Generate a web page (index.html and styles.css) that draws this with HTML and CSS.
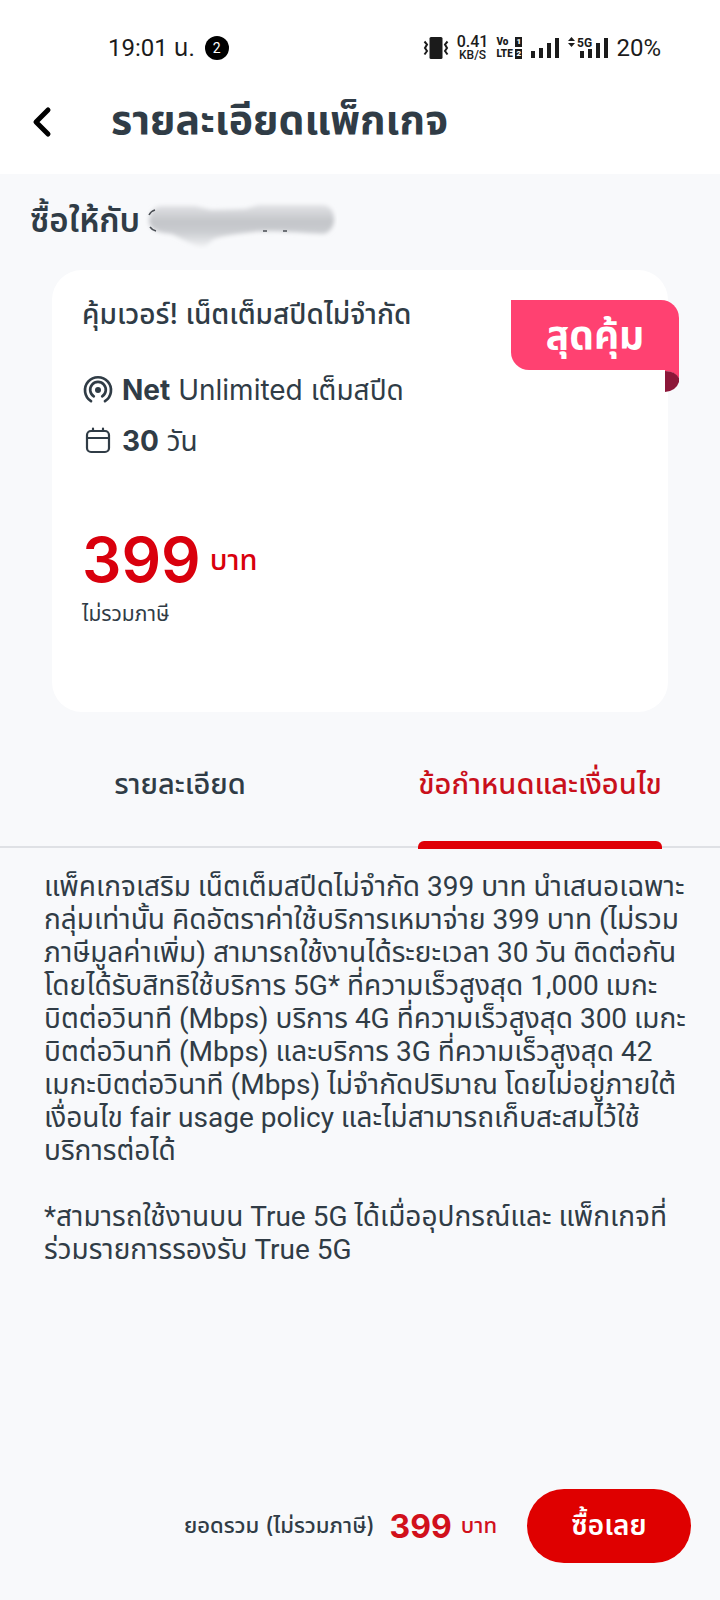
FILE: index.html
```html
<!DOCTYPE html>
<html lang="th">
<head>
<meta charset="utf-8">
<meta name="viewport" content="width=device-width, initial-scale=1">
<title>รายละเอียดแพ็กเกจ</title>
<link rel="stylesheet" href="styles.css">
</head>
<body>
<div class="screen">
  <div class="status">
    <div class="status-side">
      <span class="clock">19:01 น.</span>
      <span class="count">2</span>
    </div>
    <div class="status-side status-right">
      <svg width="26" height="24" viewBox="0 0 26 24" fill="none" stroke="#1b1b1b" stroke-width="2">
        <rect x="6.5" y="1" width="13" height="22" rx="1.5" fill="#1b1b1b" stroke="none"/>
        <path d="M1.500 5.500l2.500 3L2 12l2 3-2.500 3.500M24.500 5.500l-2.500 3 2 3.500-2 3 2.500 3.500"/>
      </svg>
      <span class="speed"><b>0.41</b><i>KB/S</i></span>
      <span class="volte"><span>Vo<em>1</em></span><span>LTE<em>2</em></span></span>
      <svg width="30" height="22" viewBox="0 0 30 22" fill="#1b1b1b">
        <path d="M1 14h4v7H1zM9 11h4v10H9zM17 6h4v15h-4zM25 1h4v20h-4z"/>
      </svg>
      <svg width="40" height="24" viewBox="0 0 40 24" fill="#1b1b1b">
        <path d="M0 5l3.500-4L7 5zM0 7l3.500 4L7 7z"/>
        <path d="M12 15h4v7h-4zM20 13h4v9h-4zM28 7h4v15h-4zM36 2h4v20h-4z"/>
        <text x="9" y="11" class="fiveg">5G</text>
      </svg>
      <span class="battery">20%</span>
    </div>
  </div>

  <header class="header">
    <button class="back" type="button" aria-label="ย้อนกลับ">
      <svg width="20" height="32" viewBox="0 0 20 32" fill="none" stroke="#000" stroke-width="5" stroke-linecap="round" stroke-linejoin="round"><path d="M16 4L4 16l12 12"/></svg>
    </button>
    <h1 class="title">รายละเอียดแพ็กเกจ</h1>
  </header>

  <main class="main">
    <div class="buyer">
      <h2 class="buyer-label">ซื้อให้กับ</h2>
      <svg class="smudge" width="192" height="48" viewBox="0 0 192 48">
        <defs>
          <filter id="soft" x="-10%" y="-20%" width="120%" height="140%"><feGaussianBlur stdDeviation="2.2"/></filter>
          <linearGradient id="shade" x1="0" y1="0" x2="0" y2="1">
            <stop offset="0" stop-color="#e2e3e6"/><stop offset="0.4" stop-color="#c3c5c9"/><stop offset="0.65" stop-color="#cbcdd1"/><stop offset="1" stop-color="#f0f1f3"/>
          </linearGradient>
        </defs>
        <path filter="url(#soft)" fill="url(#shade)" d="M4 19C5 10 10 5 17 5h33l16 4 34-1 14-4h63c16 0 16 27 1 29-22-1-50-4-70-2-16 2-34 4-41 8-5 6-9 8-14 6-9-3-17-8-26-12C16 32 4 30 4 19z"/>
        <path d="M4 14q2-4 6-5M5 26q2 3 6 4M118 30h4M138 30h4" stroke="#4a4e54" stroke-width="1.500" fill="none"/>
      </svg>
    </div>

    <section class="card">
      <h3 class="card-title">คุ้มเวอร์! เน็ตเต็มสปีดไม่จำกัด</h3>
      <div class="ribbon">
        <span>สุดคุ้ม</span>
        <svg class="fold" width="14" height="24" viewBox="0 0 14 24"><path fill="#ff4171" d="M0 0h14v9Q9 2 0 2z"/><path fill="#8c1739" d="M0 2q10 0 14 7v4q-3 9-14 10z"/></svg>
      </div>
      <div class="feature">
        <svg width="32" height="32" viewBox="0 0 32 32" fill="none" stroke="#303c46" stroke-width="2.700" stroke-linecap="round">
          <path d="M9 27.200A13 13 0 1 1 23 27.200"/><path d="M11.800 22.300A7.800 7.800 0 1 1 20.200 22.300"/><circle cx="16" cy="16" r="3" fill="#303c46" stroke="none"/>
        </svg>
        <span><b>Net</b> Unlimited เต็มสปีด</span>
      </div>
      <div class="feature">
        <svg width="32" height="32" viewBox="0 0 32 32" fill="none" stroke="#303c46" stroke-width="2.200" stroke-linecap="round">
          <rect x="5" y="6" width="22" height="21" rx="4"/><path d="M5 13h22M11 3.500V6M21 3.500V6"/>
        </svg>
        <span><b>30</b> วัน</span>
      </div>
      <p class="price"><span class="amount">399</span><span class="unit">บาท</span></p>
      <p class="tax">ไม่รวมภาษี</p>
    </section>

    <div class="tabs" role="tablist">
      <button class="tab" type="button" role="tab" aria-selected="false"><span>รายละเอียด</span></button>
      <button class="tab active" type="button" role="tab" aria-selected="true"><span>ข้อกำหนดและเงื่อนไข</span></button>
    </div>

    <section class="terms" role="tabpanel">
      <p>แพ็คเกจเสริม เน็ตเต็มสปีดไม่จำกัด 399 บาท นำเสนอเฉพาะ<br>กลุ่มเท่านั้น คิดอัตราค่าใช้บริการเหมาจ่าย 399 บาท (ไม่รวม<br>ภาษีมูลค่าเพิ่ม) สามารถใช้งานได้ระยะเวลา 30 วัน ติดต่อกัน<br>โดยได้รับสิทธิใช้บริการ 5G* ที่ความเร็วสูงสุด 1,000 เมกะ<br>บิตต่อวินาที (Mbps) บริการ 4G ที่ความเร็วสูงสุด 300 เมกะ<br>บิตต่อวินาที (Mbps) และบริการ 3G ที่ความเร็วสูงสุด 42<br>เมกะบิตต่อวินาที (Mbps) ไม่จำกัดปริมาณ โดยไม่อยู่ภายใต้<br>เงื่อนไข fair usage policy และไม่สามารถเก็บสะสมไว้ใช้<br>บริการต่อได้</p>
      <p>*สามารถใช้งานบน True 5G ได้เมื่ออุปกรณ์และ แพ็กเกจที่<br>ร่วมรายการรองรับ True 5G</p>
    </section>
  </main>

  <footer class="footer">
    <span class="total-label">ยอดรวม (ไม่รวมภาษี)</span>
    <span class="total">399</span>
    <span class="total-unit">บาท</span>
    <button class="buy" type="button">ซื้อเลย</button>
  </footer>
</div>
</body>
</html>
```
FILE: styles.css
```css
* { box-sizing: border-box; }
body, h1, h2, h3, p { margin: 0; }
body {
  background: #f8f9fb;
  color: #303c46;
  font-family: Inter, "Noto Sans Thai", "Noto Sans Thai Looped", "Noto Sans", sans-serif;
}
button { border: 0; background: none; padding: 0; font-family: inherit; color: inherit; }
svg { flex: none; }

.screen { min-height: 100vh; display: flex; flex-direction: column; }

.status {
  height: 96px;
  padding: 0 59px 0 108px;
  background: #fff;
  color: #1b1b1b;
  display: flex;
  justify-content: space-between;
  align-items: center;
  font-family: Roboto, "Noto Sans Thai", sans-serif;
}
.status-side { display: flex; align-items: center; gap: 10px; white-space: nowrap; }
.status-right { gap: 8px; }
.clock, .battery { font-size: 24px; line-height: 32px; }
.count {
  width: 24px; height: 24px; border-radius: 50%;
  background: #000; color: #fff;
  font-size: 14px; line-height: 24px; text-align: center;
}
.speed { display: flex; flex-direction: column; align-items: center; }
.speed b { font-size: 16px; line-height: 14px; font-weight: 500; }
.speed i { font-size: 12px; line-height: 12px; font-weight: 500; font-style: normal; }
.volte { display: flex; flex-direction: column; width: 26px; font-size: 10px; line-height: 12px; font-weight: 900; }
.volte span { display: flex; justify-content: space-between; align-items: center; }
.volte em { background: #1b1b1b; color: #fff; font-style: normal; font-size: 8px; line-height: 10px; width: 7px; height: 10px; text-align: center; }
.fiveg { font-size: 12px; font-weight: 700; }

.header {
  height: 78px;
  padding-left: 32px;
  background: #fff;
  display: flex;
  align-items: flex-start;
}
.back { width: 32px; height: 52px; display: flex; align-items: center; }
.title { margin-left: 47px; font-size: 41px; line-height: 46px; font-weight: 700; white-space: nowrap; }

.main { flex: 1; }
.buyer { height: 96px; padding: 22px 30px 0; display: flex; gap: 5px; }
.buyer-label { font-size: 33px; line-height: 48px; font-weight: 600; white-space: nowrap; }
.smudge { margin-top: 5px; }

.card {
  position: relative;
  margin: 0 52px;
  padding: 24px 30px 84px;
  border-radius: 30px;
  background: #fff;
}
.card-title { font-size: 28px; line-height: 40px; font-weight: 500; margin-bottom: 30px; }
.ribbon {
  position: absolute; top: 30px; right: -11px;
  width: 168px; height: 70px;
  border-radius: 0 18px 0 18px;
  background: #ff4171; color: #fff;
  font-size: 39px; line-height: 70px; font-weight: 700; text-align: center;
}
.fold { position: absolute; right: 0; top: 69px; }
.feature { display: flex; align-items: center; gap: 8px; height: 51px; font-size: 28px; }
.feature span { padding-top: 3px; }
.feature b { font-weight: 700; }
.price { display: flex; align-items: center; gap: 9px; margin-top: 54px; color: #d9000d; line-height: 80px; }
.amount { font-size: 62px; font-weight: 600; }
.unit { font-size: 29px; font-weight: 500; }
.tax { font-size: 21px; line-height: 28px; }

.tabs { display: flex; margin-top: 34px; height: 102px; border-bottom: 2px solid #dfe1e5; }
.tab { flex: 1; display: flex; justify-content: center; font-size: 29px; font-weight: 500; white-space: nowrap; }
.tab span { height: 103px; padding-top: 18px; line-height: 40px; }
.active { color: #c9101b; }
.active span { position: relative; }
.active span::after {
  content: ""; position: absolute; left: 0; right: 0; bottom: 0;
  height: 8px; border-radius: 6px 6px 0 0; background: #df0007;
}

.terms {
  padding: 22px 30px 40px 44px;
  font-family: Roboto, "Noto Sans Thai", sans-serif;
  font-size: 28px; line-height: 33px; white-space: nowrap;
}
.terms p + p { margin-top: 33px; }

.footer { display: flex; align-items: center; justify-content: flex-end; padding: 0 29px 37px; white-space: nowrap; }
.total-label { font-size: 22px; font-weight: 500; }
.total { margin-left: 15px; font-size: 32px; font-weight: 700; color: #d1101b; }
.total-unit { margin-left: 9px; font-size: 22px; font-weight: 500; color: #d1101b; }
.buy {
  margin-left: 30px; width: 164px; height: 74px; border-radius: 37px;
  background: #df0000; color: #fff; font-size: 28px; font-weight: 600;
}
```
